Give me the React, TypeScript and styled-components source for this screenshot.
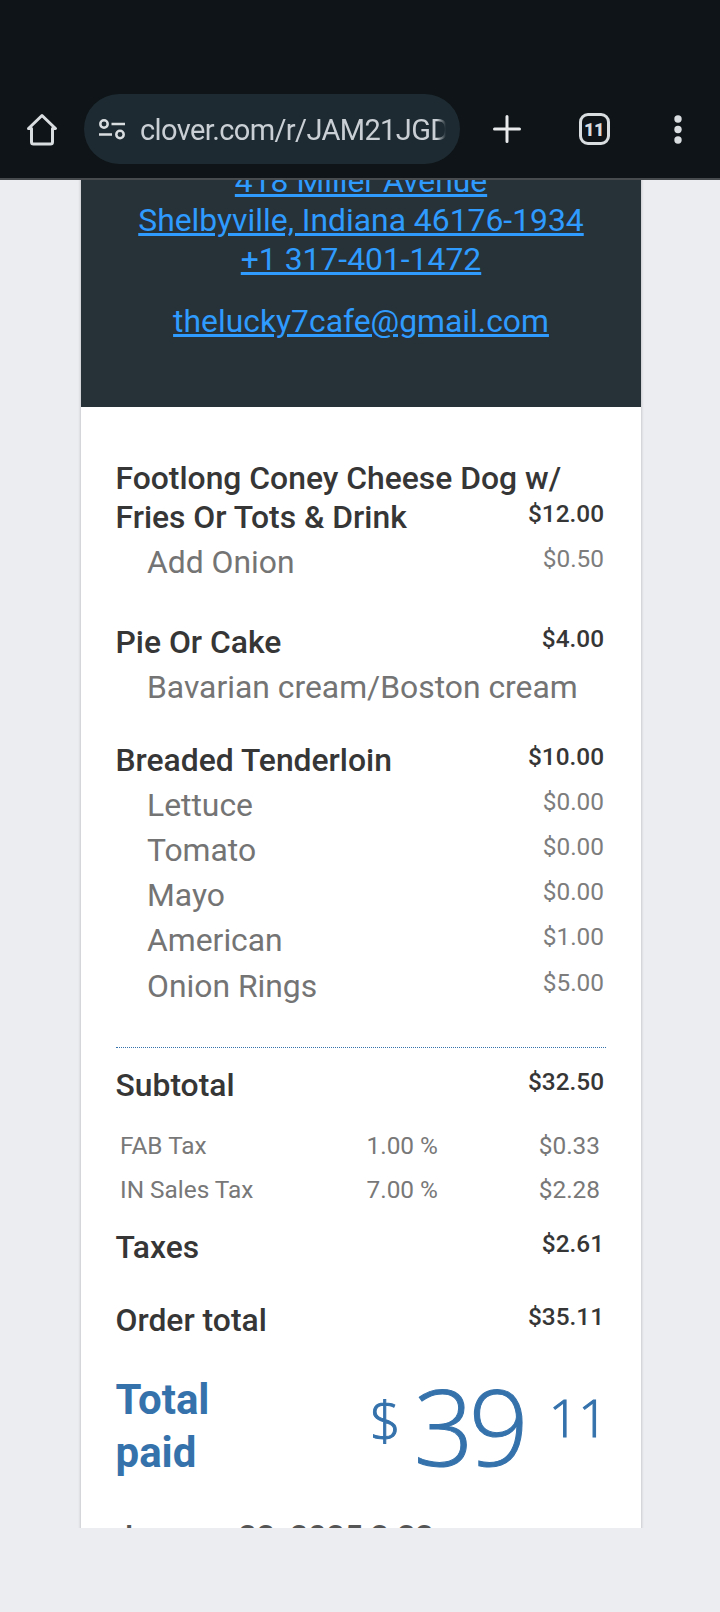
import React from 'react';
import styled, { createGlobalStyle } from 'styled-components';

const GlobalStyle = createGlobalStyle`
  html, body {
    margin: 0;
    padding: 0;
    background: #ecedf1;
    font-family: Roboto, "Liberation Sans", sans-serif;
  }
`;

const Page = styled.div`
  width: 720px;
  height: 1612px;
  display: flex;
  flex-direction: column;
  overflow: hidden;
  background: #ecedf1;
`;

const Toolbar = styled.div`
  flex: none;
  box-sizing: border-box;
  border-bottom: 2px solid #474b4e;
  height: 180px;
  background: #0e1417;
  display: flex;
  align-items: flex-end;
  padding: 0 0 14px 0;
`;

const IconSlot = styled.div<{ $width: number }>`
  width: ${(p) => p.$width}px;
  height: 70px;
  flex: none;
  display: flex;
  align-items: center;
  justify-content: center;
`;

const UrlPill = styled.div`
  width: 376px;
  height: 70px;
  flex: none;
  box-sizing: border-box;
  border-radius: 35px;
  background: #1d2a31;
  display: flex;
  align-items: center;
  padding-left: 15px;
`;

const UrlText = styled.div`
  margin-left: 15px;
  padding-top: 2px;
  width: 306px;
  overflow: hidden;
  white-space: nowrap;
  font-size: 29px;
  letter-spacing: -0.62px;
  color: #c9cfd4;
  mask-image: linear-gradient(to right, #000 97%, transparent 100%);
`;

const TabCount = styled.div`
  width: 31px;
  height: 32px;
  box-sizing: border-box;
  border: 3.5px solid #d9dde0;
  border-radius: 9px;
  display: flex;
  align-items: center;
  justify-content: center;
  font-size: 18px;
  font-weight: 900;
  letter-spacing: -0.5px;
  color: #d9dde0;
`;

const Scroller = styled.div`
  height: 1348px;
  flex: none;
  overflow: hidden;
`;

const Card = styled.div`
  width: 560px;
  margin: -18px 0 0 81px;
  background: #fff;
  box-shadow: 0 0 3px rgba(0, 0, 0, 0.25);
`;

const Header = styled.div`
  background: #263238;
  text-align: center;
  padding: 0 0 66px;
  font-size: 31.85px;
  line-height: 39px;
`;

const HeaderLink = styled.a`
  display: block;
  color: #2f9bff;
  text-decoration: underline;
`;

const EmailLink = styled(HeaderLink)`
  margin-top: 23px;
`;

const Body = styled.div`
  padding: 52px 35px 0 34.5px;
`;

const Section = styled.div<{ $gap: number }>`
  margin-bottom: ${(p) => p.$gap}px;
`;

const Row = styled.div`
  display: flex;
  justify-content: space-between;
  align-items: flex-end;
`;

const Name = styled.div`
  font-size: 31.85px;
  font-weight: 500;
  line-height: 39px;
  color: #363636;
`;

const Price = styled.div`
  flex: none;
  text-align: right;
  padding: 0 2px 8px 0;
  font-size: 24.4px;
  font-weight: 500;
  line-height: 30px;
  color: #363636;
`;

const ModList = styled.div`
  padding-top: 3px;
`;

const ModRow = styled(Row)`
  height: 45.25px;
  align-items: flex-start;
`;

const ModName = styled.div`
  padding-left: 31.5px;
  font-size: 31.85px;
  line-height: 45px;
  color: #747474;
`;

const ModPrice = styled.div`
  padding: 4px 2px 0 0;
  font-size: 24.4px;
  line-height: 30px;
  color: #7d7d7d;
`;

const Divider = styled.div`
  border-top: 1px dotted #3572ac;
  margin-bottom: 18px;
`;

const TaxTable = styled.div`
  margin: 19px 0 16px;
  padding: 0 6px 0 4.5px;
`;

const TaxRow = styled.div`
  display: grid;
  grid-template-columns: 246.5px 1fr auto;
  height: 44px;
  align-items: center;
  font-size: 24.4px;
  color: #787878;
`;

const OrderTotal = styled.div`
  margin-top: 34px;
`;

const TotalRow = styled.div`
  display: flex;
  justify-content: space-between;
  margin-top: 33px;
`;

const TotalLabel = styled.div`
  width: 120px;
  font-size: 42px;
  font-weight: 700;
  line-height: 53px;
  color: #3572ac;
`;

const Amount = styled.div`
  display: flex;
  align-items: flex-start;
  margin-right: -2px;
  font-family: "Open Sans", sans-serif;
  color: #3572ac;
  -webkit-text-stroke: 1px #3572ac;
`;

const AmountPart = styled.span<{ $size: number; $left: number; $top: number; $tight?: number }>`
  font-size: ${(p) => p.$size}px;
  font-weight: 300;
  letter-spacing: ${(p) => p.$tight ?? 0}px;
  line-height: ${(p) => p.$size}px;
  margin-left: ${(p) => p.$left}px;
  margin-top: ${(p) => p.$top}px;
`;

const DateLine = styled.div`
  margin-top: 38px;
  font-size: 32px;
  font-weight: 500;
  line-height: 39px;
  color: #555;
`;

const items = [
  {
    lead: 'Footlong Coney Cheese Dog w/',
    name: 'Fries Or Tots & Drink',
    price: '$12.00',
    gap: 38,
    mods: [['Add Onion', '$0.50']],
  },
  {
    name: 'Pie Or Cake',
    price: '$4.00',
    gap: 30,
    mods: [['Bavarian cream/Boston cream', '']],
  },
  {
    name: 'Breaded Tenderloin',
    price: '$10.00',
    gap: 38,
    mods: [
      ['Lettuce', '$0.00'],
      ['Tomato', '$0.00'],
      ['Mayo', '$0.00'],
      ['American', '$1.00'],
      ['Onion Rings', '$5.00'],
    ],
  },
];

const taxes = [
  ['FAB Tax', '1.00 %', '$0.33'],
  ['IN Sales Tax', '7.00 %', '$2.28'],
];

const HomeIcon = () => (
  <svg width="32" height="33" viewBox="0 0 32 33" fill="none" stroke="#d9dde0" strokeWidth="3" strokeLinejoin="round">
    <path d="M2.5 15.500 16 2.500l13.500 13h-3v13.500a2 2 0 0 1-2 2h-17a2 2 0 0 1-2-2V15.500z" />
  </svg>
);

const TuneIcon = () => (
  <svg width="26" height="21" viewBox="0 0 26 21" fill="none" stroke="#d9dde0" strokeWidth="2.500">
    <circle cx="5" cy="5" r="3.700" />
    <path d="M12.500 5H26M0 15.500h13" />
    <circle cx="21" cy="15.500" r="3.700" />
  </svg>
);

const PlusIcon = () => (
  <svg width="28" height="28" viewBox="0 0 28 28" stroke="#e8eaec" strokeWidth="3" strokeLinecap="round">
    <path d="M14 1.500v25M1.500 14h25" />
  </svg>
);

const DotsIcon = () => (
  <svg width="10" height="29" viewBox="0 0 10 29" fill="#d9dde0">
    <circle cx="5" cy="4" r="3.700" />
    <circle cx="5" cy="14.500" r="3.700" />
    <circle cx="5" cy="25" r="3.700" />
  </svg>
);

export default function App() {
  return (
    <Page>
      <GlobalStyle />
      <Toolbar>
        <IconSlot $width={84}><HomeIcon /></IconSlot>
        <UrlPill>
          <TuneIcon />
          <UrlText>clover.com/r/JAM21JGD1</UrlText>
        </UrlPill>
        <IconSlot $width={94}><PlusIcon /></IconSlot>
        <IconSlot $width={80}><TabCount>11</TabCount></IconSlot>
        <IconSlot $width={88}><DotsIcon /></IconSlot>
      </Toolbar>
      <Scroller>
        <Card>
          <Header>
            <HeaderLink>418 Miller Avenue</HeaderLink>
            <HeaderLink>Shelbyville, Indiana 46176-1934</HeaderLink>
            <HeaderLink>+1 317-401-1472</HeaderLink>
            <EmailLink>thelucky7cafe@gmail.com</EmailLink>
          </Header>
          <Body>
            {items.map((item) => (
              <Section key={item.name} $gap={item.gap}>
                {item.lead && <Name>{item.lead}</Name>}
                <Row>
                  <Name>{item.name}</Name>
                  <Price>{item.price}</Price>
                </Row>
                <ModList>
                  {item.mods.map(([label, price]) => (
                    <ModRow key={label}>
                      <ModName>{label}</ModName>
                      <ModPrice>{price}</ModPrice>
                    </ModRow>
                  ))}
                </ModList>
              </Section>
            ))}
            <Divider />
            <Row>
              <Name>Subtotal</Name>
              <Price>$32.50</Price>
            </Row>
            <TaxTable>
              {taxes.map(([label, rate, amount]) => (
                <TaxRow key={label}>
                  <span>{label}</span>
                  <span>{rate}</span>
                  <span>{amount}</span>
                </TaxRow>
              ))}
            </TaxTable>
            <Row>
              <Name>Taxes</Name>
              <Price>$2.61</Price>
            </Row>
            <OrderTotal>
              <Row>
                <Name>Order total</Name>
                <Price>$35.11</Price>
              </Row>
            </OrderTotal>
            <TotalRow>
              <TotalLabel>Total paid</TotalLabel>
              <Amount>
                <AmountPart $size={54} $left={0} $top={19}>$</AmountPart>
                <AmountPart $size={105} $left={13} $top={0} $tight={-5}>39</AmountPart>
                <AmountPart $size={52} $left={25} $top={18}>11</AmountPart>
              </Amount>
            </TotalRow>
            <DateLine>January 22, 2025 3:33</DateLine>
          </Body>
        </Card>
      </Scroller>
    </Page>
  );
}
